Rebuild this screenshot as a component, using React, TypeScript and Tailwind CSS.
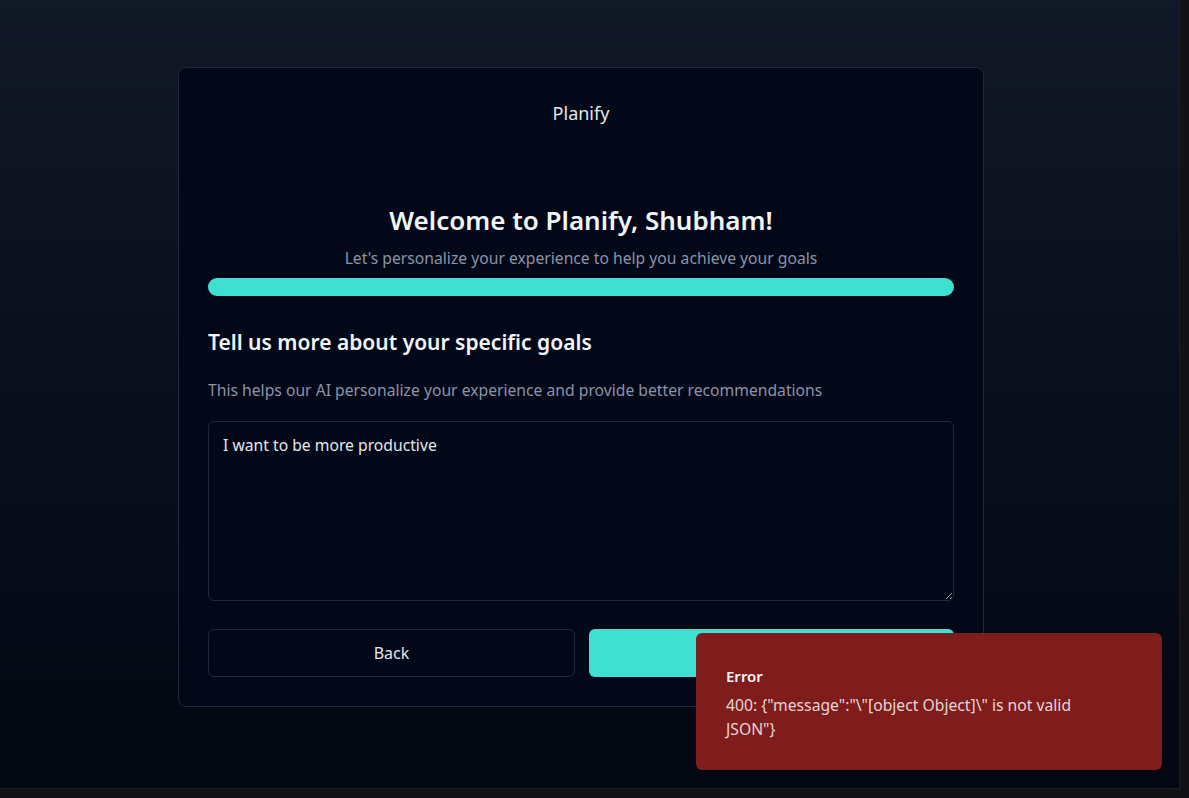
import React, { useState } from 'react';

const font = { fontFamily: '"Segoe UI", "Noto Sans", "Open Sans", sans-serif' };

const App: React.FC = () => {
  const [goals, setGoals] = useState('I want to be more productive');

  return (
    <div className="w-full h-[798px] bg-[#111116] overflow-hidden" style={font}>
      <div className="relative w-[1180px] h-[789px] bg-gradient-to-b from-[#111827] to-[#030712] border-r border-b border-[#1a1d26]">
        <div className="pt-[67px] pl-[178px]">
          <div className="w-[806px] h-[640px] rounded-lg border border-[#1e293b] bg-[#020817] px-[29px]">
            <div className="pt-[32px] text-center text-[18px] leading-[27px] text-[#e5e7eb]">Planify</div>

            <div className="mt-[76px] text-center">
              <h1 className="text-[26px] leading-[34px] font-semibold text-[#f1f5f9]">Welcome to Planify, Shubham!</h1>
              <p className="mt-[9px] text-[15.7px] leading-[24px] text-[#8b93a7]">
                Let's personalize your experience to help you achieve your goals
              </p>
            </div>

            <div className="mt-[8px] h-[18px] rounded-full bg-[#40e0d0]" />

            <h2 className="mt-[31px] text-[21px] leading-[30px] font-semibold text-[#f1f5f9]">
              Tell us more about your specific goals
            </h2>
            <p className="mt-[21px] text-[15.7px] leading-[24px] text-[#8b93a7]">
              This helps our AI personalize your experience and provide better recommendations
            </p>

            <textarea
              value={goals}
              onChange={(e) => setGoals(e.target.value)}
              className="mt-[19px] block w-full h-[180px] rounded-md border border-[#1e293b] bg-[#020817] px-[14px] py-[11px] text-[15.7px] leading-[24px] text-[#e5e7eb] outline-none resize-y"
            />

            <div className="mt-[28px] flex gap-[14px]">
              <button className="flex-1 h-[48px] rounded-md border border-[#1e293b] bg-[#020817] text-[16px] text-[#e5e7eb]">
                Back
              </button>
              <button className="flex-1 h-[48px] rounded-md bg-[#40e0d0] text-[16px] font-medium text-[#020817]">
                Next
              </button>
            </div>
          </div>
        </div>

        <div className="absolute left-[696px] top-[633px] w-[466px] h-[137px] rounded-md bg-[#7f1d1d] pl-[30px] pr-[24px] pt-[32px]">
          <div className="text-[15px] leading-[22px] font-semibold text-[#f3f4f6]">Error</div>
          <div className="mt-[6px] text-[15.7px] leading-[24px] text-[#e5d5d5] w-[370px]">
            400: {'{"message":"\\"[object Object]\\" is not valid JSON"}'}
          </div>
        </div>
      </div>
    </div>
  );
};

export default App;
